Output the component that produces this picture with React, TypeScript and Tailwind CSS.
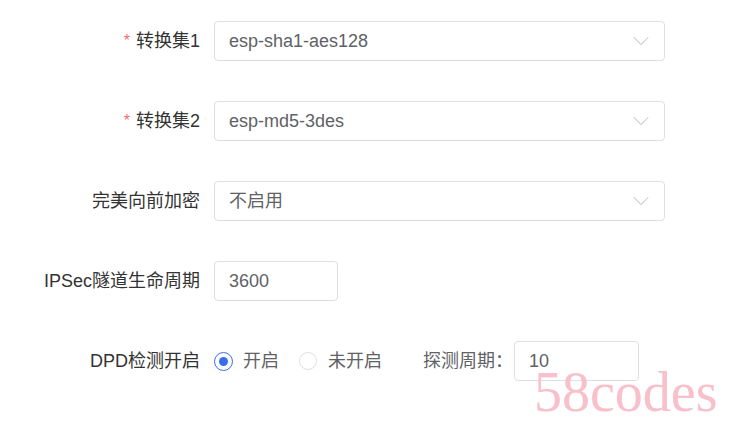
import { ChevronDown } from 'lucide-react';

const font = { fontFamily: '"Liberation Sans", Arial, "Noto Sans CJK SC", sans-serif' };

function Label({ text, required }: { text: string; required?: boolean }) {
  return (
    <div className="w-[200px] shrink-0 flex items-center justify-end text-[18px] text-[#333333]">
      {required && <span className="text-[#f56c6c] mr-[6px] text-[16px]">*</span>}
      {text}
    </div>
  );
}

function Select({ value }: { value: string }) {
  return (
    <div className="ml-[14px] w-[451px] h-[40px] border border-[#dcdfe6] rounded-[4px] flex items-center justify-between pl-[14px] pr-[9px] text-[18px] text-[#606266]">
      <span>{value}</span>
      <ChevronDown className="w-[28px] h-[28px] text-[#c0c4cc]" strokeWidth={0.9} />
    </div>
  );
}

function Input({ value, width }: { value: string; width: string }) {
  return (
    <div className={`h-[40px] border border-[#dcdfe6] rounded-[4px] flex items-center pl-[14px] text-[18px] text-[#606266] ${width}`}>
      {value}
    </div>
  );
}

export default function App() {
  return (
    <div className="relative w-[734px] h-[424px] bg-white overflow-hidden" style={font}>
      <div className="pt-[21px] flex flex-col gap-[40px]">
        <div className="flex h-[40px]">
          <Label text="转换集1" required />
          <Select value="esp-sha1-aes128" />
        </div>
        <div className="flex h-[40px]">
          <Label text="转换集2" required />
          <Select value="esp-md5-3des" />
        </div>
        <div className="flex h-[40px]">
          <Label text="完美向前加密" />
          <Select value="不启用" />
        </div>
        <div className="flex h-[40px]">
          <Label text="IPSec隧道生命周期" />
          <div className="ml-[14px]">
            <Input value="3600" width="w-[124px]" />
          </div>
        </div>
        <div className="flex h-[40px]">
          <Label text="DPD检测开启" />
          <div className="ml-[14px] flex items-center text-[18px]">
            <span className="w-[19px] h-[19px] rounded-full border border-[#3b6fe8] flex items-center justify-center">
              <span className="w-[9px] h-[9px] rounded-full bg-[#3b6fe8]" />
            </span>
            <span className="ml-[10px] text-[#606266]">开启</span>
            <span className="ml-[20px] w-[18px] h-[18px] rounded-full border border-[#dcdfe6]" />
            <span className="ml-[11px] text-[#606266]">未开启</span>
            <span className="ml-[41px] text-[#606266]">探测周期：</span>
            <div className="ml-[1px]">
              <Input value="10" width="w-[125px]" />
            </div>
          </div>
        </div>
      </div>
      <div
        className="absolute left-[534px] top-[364px] text-[56px] leading-none text-[#f8c0cb]"
        style={{ fontFamily: '"Liberation Serif", "Times New Roman", serif' }}
      >
        58codes
      </div>
    </div>
  );
}
